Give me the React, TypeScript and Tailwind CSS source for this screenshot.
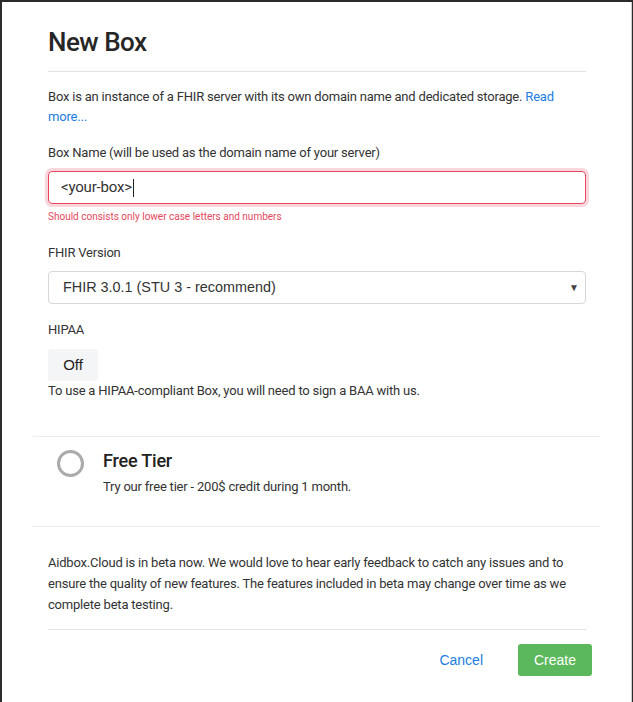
function Field({ label, children }: { label: string; children: React.ReactNode }) {
  return (
    <div>
      <div className="text-[13px] leading-[20px] tracking-[-0.2px] text-[#333]">{label}</div>
      {children}
    </div>
  );
}

export default function App() {
  return (
    <div className="w-[633px] h-[702px] bg-[#2b2b2b] pt-[2px] pl-[2px] overflow-hidden font-['Roboto',sans-serif]">
      <div className="w-[630px] h-[700px] bg-white border-r border-[#d0d0d0]">
        {/* header */}
        <div className="pl-[46px] pr-[45px] pt-[25px]">
          <h1 className="text-[26px] leading-[30px] font-medium tracking-[-0.5px] text-[#262626]">New Box</h1>
          <div className="mt-[14px] border-t border-[#e3e3e3]" />

          <p className="mt-[15px] text-[13px] leading-[20px] tracking-[-0.2px] text-[#333]">
            Box is an instance of a FHIR server with its own domain name and dedicated storage.{" "}
            <a className="text-[#1a7de0]">Read more...</a>
          </p>

          {/* box name */}
          <div className="mt-[16px]">
            <Field label="Box Name (will be used as the domain name of your server)">
              <div className="mt-[8px] h-[33px] rounded-[4px] border border-[#e5485e] shadow-[0_0_0_3px_rgba(229,72,94,0.22)] flex items-center px-[12px] text-[15px] tracking-[-0.2px] text-[#333]">
                &lt;your-box&gt;
                <span className="ml-px h-[18px] w-px bg-[#222]" />
              </div>
              <div className="mt-[6px] text-[10px] leading-[14px] text-[#e5485e]">
                Should consists only lower case letters and numbers
              </div>
            </Field>
          </div>

          {/* version */}
          <div className="mt-[19px]">
            <Field label="FHIR Version">
              <div className="mt-[8px] h-[33px] rounded-[4px] border border-[#d8d8d8] flex items-center justify-between pl-[14px] pr-[6px] font-['Liberation_Sans',sans-serif] text-[14.4px] text-[#333]">
                <span>FHIR 3.0.1 (STU 3 - recommend)</span>
                <span className="text-[10px] text-[#444]">▼</span>
              </div>
            </Field>
          </div>

          {/* hipaa */}
          <div className="mt-[16px]">
            <Field label="HIPAA">
              <div className="mt-[9px] w-[50px] h-[32px] rounded-[3px] bg-[#f4f5f6] flex items-center justify-center font-['Liberation_Sans',sans-serif] text-[15px] text-[#222]">
                Off
              </div>
              <div className="text-[13px] leading-[20px] tracking-[-0.2px] text-[#333]">
                To use a HIPAA-compliant Box, you will need to sign a BAA with us.
              </div>
            </Field>
          </div>
        </div>

        {/* tier */}
        <div className="mx-[31px] mt-[35px] border-t border-b border-[#ececec] h-[91px] flex pt-[13px] pl-[24px]">
          <div className="w-[27px] h-[27px] rounded-full border-[3px] border-[#aaa]" />
          <div className="ml-[19px]">
            <div className="text-[18px] leading-[22px] font-medium tracking-[-0.2px] text-[#222]">Free Tier</div>
            <div className="mt-[5px] text-[13px] leading-[20px] tracking-[-0.2px] text-[#333]">
              Try our free tier - 200$ credit during 1 month.
            </div>
          </div>
        </div>

        {/* beta note */}
        <div className="pl-[46px] pr-[45px]">
          <p className="mt-[25px] text-[13px] leading-[21px] tracking-[-0.2px] text-[#333]">
            Aidbox.Cloud is in beta now. We would love to hear early feedback to catch any issues and to
            ensure the quality of new features. The features included in beta may change over time as we
            complete beta testing.
          </p>
          <div className="mt-[14px] border-t border-[#e3e3e3]" />
          <div className="mt-[14px] flex justify-end items-center gap-[35px] mr-[-6px] font-['Liberation_Sans',sans-serif] text-[14px]">
            <span className="text-[#1a7de0]">Cancel</span>
            <button className="w-[74px] h-[32px] rounded-[3px] bg-[#5cb85c] text-white">Create</button>
          </div>
        </div>
      </div>
    </div>
  );
}
